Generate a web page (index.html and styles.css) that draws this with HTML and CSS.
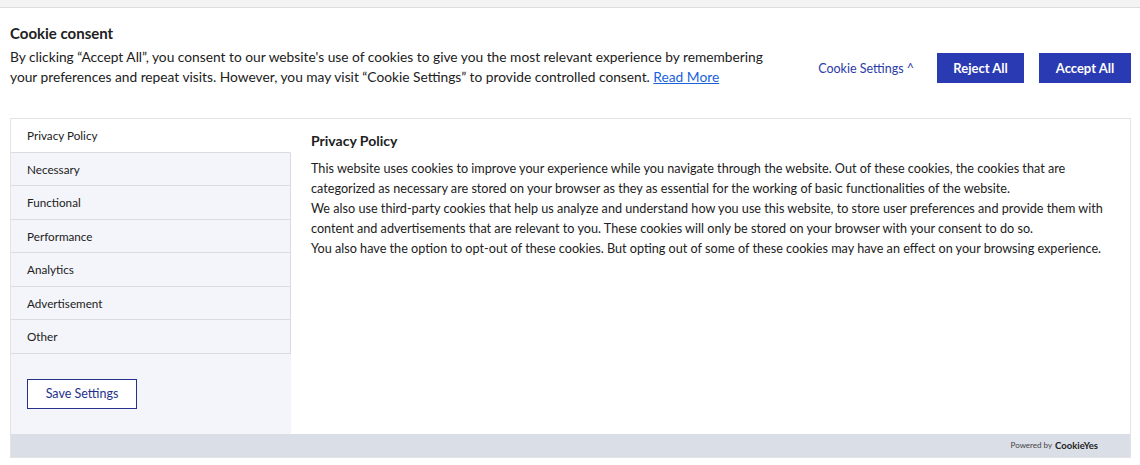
FILE: index.html
```html
<!DOCTYPE html>
<html lang="en">
<head>
<meta charset="utf-8">
<title>Cookie consent</title>
<link rel="stylesheet" href="styles.css">
</head>
<body>
<div class="topbar"></div>
<div class="banner">
  <div class="notice">
    <div class="notice-text">
      <h2 class="title">Cookie consent</h2>
      <p class="desc">By clicking “Accept All”, you consent to our website's use of cookies to give you the most relevant experience by remembering your preferences and repeat visits. However, you may visit “Cookie Settings” to provide controlled consent. <a class="read-more" href="#">Read More</a></p>
    </div>
    <div class="actions">
      <button class="btn-link">Cookie Settings ^</button>
      <button class="btn btn-reject">Reject All</button>
      <button class="btn btn-accept">Accept All</button>
    </div>
  </div>
  <div class="panel">
    <div class="panel-body">
      <div class="sidebar">
        <ul class="tabs">
          <li class="tab active">Privacy Policy</li>
          <li class="tab">Necessary</li>
          <li class="tab">Functional</li>
          <li class="tab">Performance</li>
          <li class="tab">Analytics</li>
          <li class="tab">Advertisement</li>
          <li class="tab">Other</li>
        </ul>
        <div class="save-wrap"><button class="btn-save">Save Settings</button></div>
      </div>
      <div class="content">
        <h3 class="content-title">Privacy Policy</h3>
        <p class="content-text">This website uses cookies to improve your experience while you navigate through the website. Out of these cookies, the cookies that are categorized as necessary are stored on your browser as they as essential for the working of basic functionalities of the website.<br>We also use third-party cookies that help us analyze and understand how you use this website, to store user preferences and provide them with content and advertisements that are relevant to you. These cookies will only be stored on your browser with your consent to do so.<br>You also have the option to opt-out of these cookies. But opting out of some of these cookies may have an effect on your browsing experience.</p>
      </div>
    </div>
    <div class="panel-footer"><span class="powered">Powered by</span><span class="brand">CookieYes</span></div>
  </div>
</div>
</body>
</html>
```
FILE: styles.css
```css
* { box-sizing: border-box; }
html, body { margin: 0; padding: 0; background: #fff; }
body { font-family: "Lato", "Liberation Sans", sans-serif; color: #212121; }
.topbar { height: 8px; background: #f3f3f3; border-bottom: 1px solid #dcdcdc; }
.banner { padding: 15px 9px 0 10px; }
.notice { display: flex; align-items: center; justify-content: space-between; }
.notice-text { width: 770px; }
.title { margin: 0 0 4px; font-size: 15px; line-height: 20px; font-weight: 700; color: #212121; }
.desc { margin: 0; font-size: 13.75px; line-height: 20px; color: #212121; }
.read-more { color: #1863dc; text-decoration: underline; }
.actions { display: flex; align-items: center; margin-top: 26px; }
.btn-link { background: none; border: 0; padding: 0; font-family: inherit; font-size: 12.5px; color: #2a3ba8; margin-right: 23px; cursor: pointer; }
.btn { height: 30px; border: 0; background: #2a3ab2; color: #fff; font-family: inherit; font-size: 13px; font-weight: 700; cursor: pointer; }
.btn-reject { width: 87px; margin-right: 15px; }
.btn-accept { width: 92px; }
.panel { margin-top: 31px; border: 1px solid #e3e3e3; height: 340px; display: flex; flex-direction: column; }
.panel-body { flex: 1; display: flex; }
.sidebar { width: 280px; background: #f4f5fa; display: flex; flex-direction: column; }
.tabs { list-style: none; margin: 0; padding: 0; }
.tab { height: 33.5px; line-height: 32px; padding-left: 16px; font-size: 11.7px; color: #212121; border-bottom: 1px solid #d8dce5; border-right: 1px solid #d8dce5; }
.tab.active { background: #fff; border-right-color: transparent; }
.save-wrap { padding: 25px 16px; }
.btn-save { width: 110px; height: 30px; background: #fff; border: 1px solid #27318b; color: #27318b; font-family: inherit; font-size: 12.5px; cursor: pointer; }
.content { flex: 1; padding: 12px 20px 0; }
.content-title { margin: 0 0 8px; font-size: 14px; line-height: 20px; font-weight: 700; color: #212121; }
.content-text { margin: 0; font-size: 12.65px; line-height: 20px; color: #212121; }
.panel-footer { height: 26px; background: #dadee6; display: flex; align-items: center; justify-content: flex-end; padding-right: 32px; }
.powered { font-size: 8px; color: #444; margin-right: 3px; }
.brand { font-size: 9.5px; font-weight: 700; color: #222; }
```
